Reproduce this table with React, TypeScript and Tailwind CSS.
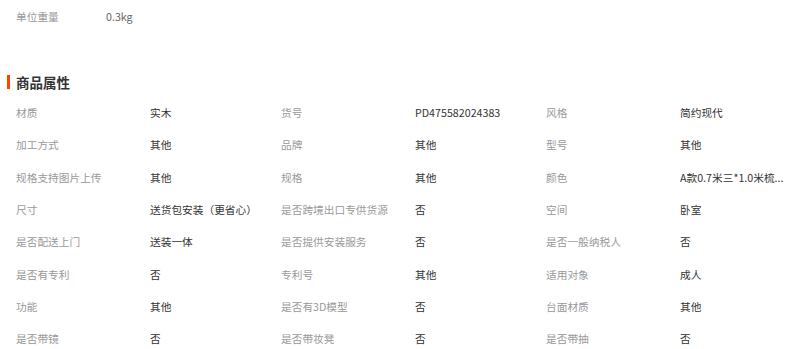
import React from 'react';

const attrs: [string, string][] = [
  ['材质', '实木'],
  ['货号', 'PD475582024383'],
  ['风格', '简约现代'],
  ['加工方式', '其他'],
  ['品牌', '其他'],
  ['型号', '其他'],
  ['规格支持图片上传', '其他'],
  ['规格', '其他'],
  ['颜色', 'A款0.7米三*1.0米梳...'],
  ['尺寸', '送货包安装（更省心）'],
  ['是否跨境出口专供货源', '否'],
  ['空间', '卧室'],
  ['是否配送上门', '送装一体'],
  ['是否提供安装服务', '否'],
  ['是否一般纳税人', '否'],
  ['是否有专利', '否'],
  ['专利号', '其他'],
  ['适用对象', '成人'],
  ['功能', '其他'],
  ['是否有3D模型', '否'],
  ['台面材质', '其他'],
  ['是否带镜', '否'],
  ['是否带妆凳', '否'],
  ['是否带抽', '否'],
];

const App: React.FC = () => {
  return (
    <div
      className="w-[800px] h-[349px] overflow-hidden bg-white text-[10.7px]"
      style={{ fontFamily: '"Noto Sans CJK SC", "Noto Sans", sans-serif' }}
    >
      {/* Weight row */}
      <div className="flex items-center h-[34px] pl-4">
        <span className="w-[90px] text-[#999]">单位重量</span>
        <span className="text-[#666]">0.3kg</span>
      </div>

      {/* Section title */}
      <div className="flex items-center h-[26px] mt-[35px] pl-[7px]">
        <span className="w-[3px] h-[14px] bg-[#ff4400] mr-[6px]" />
        <h3 className="text-[13.5px] font-bold text-[#333]">商品属性</h3>
      </div>

      {/* Attribute grid */}
      <div className="grid grid-cols-[134px_131px_134px_131px_134px_1fr] pl-4 mt-[2px] auto-rows-[32.3px]">
        {attrs.map(([label, value], i) => (
          <React.Fragment key={i}>
            <div className="flex items-center text-[#999] whitespace-nowrap">{label}</div>
            <div className="flex items-center text-[#333] whitespace-nowrap">{value}</div>
          </React.Fragment>
        ))}
      </div>
    </div>
  );
};

export default App;
